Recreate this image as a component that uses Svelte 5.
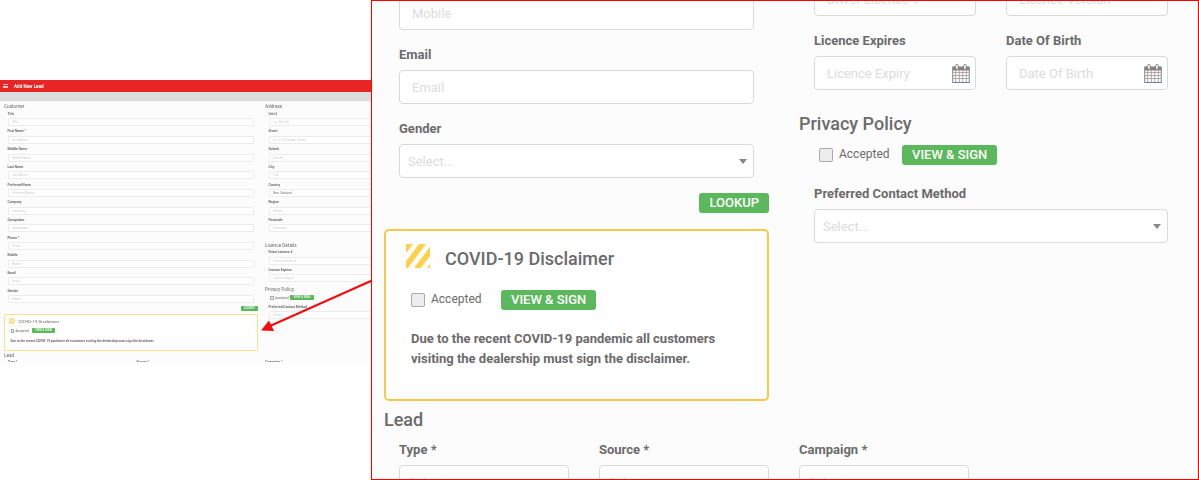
<script>
  const customerFields = [
    { label: 'Title', hint: 'Title' },
    { label: 'First Name *', hint: 'First Name' },
    { label: 'Middle Name', hint: 'Middle Name' },
    { label: 'Last Name', hint: 'Last Name' },
    { label: 'Preferred Name', hint: 'Preferred Name' },
    { label: 'Company', hint: 'Company' },
    { label: 'Occupation', hint: 'Occupation' },
    { label: 'Phone *', hint: 'Phone' },
    { label: 'Mobile', hint: 'Mobile' },
    { label: 'Email', hint: 'Email' },
    { label: 'Gender', hint: 'Select...' }
  ];

  const addressFields = [
    { label: 'Unit #', hint: 'e.g. Flat 6A' },
    { label: 'Street', hint: 'e.g. 123 Sample Street' },
    { label: 'Suburb', hint: 'Suburb' },
    { label: 'City', hint: 'City' },
    { label: 'Country', value: 'New Zealand' },
    { label: 'Region', hint: 'Select...' },
    { label: 'Postcode', hint: 'Postcode' }
  ];

  const licenceFields = [
    { label: 'Driver Licence #', hint: 'Driver Licence #' },
    { label: 'Licence Expires', hint: 'Licence Expiry' }
  ];

  const leadLabels = ['Type *', 'Source *', 'Campaign *'];
  const calendarCols = [3.5, 7, 10.5, 14];
  const calendarRows = [8.5, 11.5, 14.5];
</script>

{#snippet stripes(id)}
  <svg class="stripes" viewBox="0 0 24 24" aria-hidden="true">
    <clipPath {id}><rect width="24" height="24" /></clipPath>
    <g clip-path="url(#{id})" fill="#fbd14f">
      <polygon points="0,0 7,0 -11,24 -18,24" />
      <polygon points="13,0 20,0 2,24 -5,24" />
      <polygon points="26,0 33,0 15,24 8,24" />
      <polygon points="39,0 46,0 28,24 21,24" />
    </g>
  </svg>
{/snippet}

{#snippet calendar()}
  <svg class="calendar" viewBox="0 0 17.5 19" aria-hidden="true">
    <rect x="0.5" y="3" width="16.5" height="15.5" fill="#fff" stroke="#76808c" />
    <rect x="0.5" y="3" width="16.5" height="3.5" fill="#8d7f72" />
    <rect x="3.5" y="0.5" width="2.5" height="5" rx="1" fill="#fff" stroke="#6d6a68" stroke-width="0.8" />
    <rect x="11.5" y="0.5" width="2.5" height="5" rx="1" fill="#fff" stroke="#6d6a68" stroke-width="0.8" />
    {#each calendarCols as x}
      <line x1={x} x2={x} y1="6.5" y2="18" stroke="#8b8f99" stroke-width="0.8" />
    {/each}
    {#each calendarRows as y}
      <line x1="1" x2="16.5" y1={y} y2={y} stroke="#a8958d" stroke-width="0.8" />
    {/each}
  </svg>
{/snippet}

<div class="screen">
  <div class="thumb-area">
    <div class="thumb">
      <header class="t-bar">
        <span class="t-burger"><i></i><i></i><i></i></span>
        <span>Add New Lead</span>
      </header>
      <div class="t-strip"></div>
      <div class="t-body">
        <div class="t-cols">
          <section class="t-left">
            <h4>Customer</h4>
            {#each customerFields as f}
              <div class="t-field">
                <span>{f.label}</span>
                <input placeholder={f.hint} readonly />
              </div>
            {/each}
            <div class="t-lookup-row"><b class="t-btn t-lookup">LOOKUP</b></div>
            <div class="t-card">
              <div class="t-card-head">
                {@render stripes('stripe-small')}
                <span>COVID-19 Disclaimer</span>
              </div>
              <div class="t-check">
                <i></i><span>Accepted</span><b class="t-btn">VIEW &amp; SIGN</b>
              </div>
              <p>Due to the recent COVID-19 pandemic all customers visiting the dealership must sign the disclaimer.</p>
            </div>
          </section>
          <section class="t-right">
            <h4>Address</h4>
            {#each addressFields as f}
              <div class="t-field">
                <span>{f.label}</span>
                <input placeholder={f.hint} value={f.value ?? ''} readonly />
              </div>
            {/each}
            <h4 class="t-gap">Licence Details</h4>
            {#each licenceFields as f}
              <div class="t-field">
                <span>{f.label}</span>
                <input placeholder={f.hint} readonly />
              </div>
            {/each}
            <h4 class="t-privacy">Privacy Policy</h4>
            <div class="t-check t-check-right">
              <i></i><span>Accepted</span><b class="t-btn">VIEW &amp; SIGN</b>
            </div>
            <div class="t-field">
              <span>Preferred Contact Method</span>
              <input placeholder="Select..." readonly />
            </div>
          </section>
        </div>
        <h4 class="t-lead">Lead</h4>
        <div class="t-lead-row">
          {#each leadLabels as label}
            <span>{label}</span>
          {/each}
        </div>
      </div>
    </div>
  </div>

  <main class="panel">
    <div class="columns">
      <section class="left">
        <div class="field first-left">
          <input placeholder="Mobile" readonly />
        </div>
        <div class="field">
          <label for="email">Email</label>
          <input id="email" placeholder="Email" readonly />
        </div>
        <div class="field">
          <span class="label">Gender</span>
          <div class="select"><span>Select...</span><i class="caret"></i></div>
        </div>
        <div class="lookup-row"><button class="btn">LOOKUP</button></div>
        <div class="card">
          <div class="card-head">
            {@render stripes('stripe-large')}
            <h3>COVID-19 Disclaimer</h3>
          </div>
          <div class="accept card-accept">
            <i class="box"></i>
            <span>Accepted</span>
            <button class="btn">VIEW &amp; SIGN</button>
          </div>
          <p>Due to the recent COVID-19 pandemic all customers visiting the dealership must sign the disclaimer.</p>
        </div>
      </section>

      <section class="right">
        <div class="pair first-right">
          <input placeholder="Driver Licence #" readonly />
          <input placeholder="Licence Version" readonly />
        </div>
        <div class="pair">
          <div>
            <span class="label">Licence Expires</span>
            <div class="date"><input placeholder="Licence Expiry" readonly />{@render calendar()}</div>
          </div>
          <div>
            <span class="label">Date Of Birth</span>
            <div class="date"><input placeholder="Date Of Birth" readonly />{@render calendar()}</div>
          </div>
        </div>
        <h3 class="section-title privacy">Privacy Policy</h3>
        <div class="accept privacy-accept">
          <i class="box"></i>
          <span>Accepted</span>
          <button class="btn">VIEW &amp; SIGN</button>
        </div>
        <div class="field contact">
          <span class="label">Preferred Contact Method</span>
          <div class="select"><span>Select...</span><i class="caret"></i></div>
        </div>
      </section>
    </div>

    <h3 class="section-title lead-title">Lead</h3>
    <div class="lead-row">
      {#each leadLabels as label}
        <div class="lead-cell">
          <span class="label">{label}</span>
          <div class="select"><span>Select...</span></div>
        </div>
      {/each}
    </div>
  </main>

  <svg class="arrow" viewBox="0 0 1199 480" aria-hidden="true">
    <line x1="372" y1="280.5" x2="270" y2="326" stroke="#f40c0c" stroke-width="2" />
    <polygon points="261,330.5 269,320.5 274,331" fill="#f40c0c" />
  </svg>
</div>

<style>
  :global(body) {
    margin: 0;
    background: #fff;
  }

  .screen {
    position: relative;
    display: flex;
    width: 1199px;
    height: 480px;
    overflow: hidden;
    font-family: Roboto, "Liberation Sans", sans-serif;
    color: #6b6b6b;
  }

  /* small page shot on the left */
  .thumb-area {
    flex: 0 0 371px;
    min-width: 0;
    overflow: hidden;
    padding-top: 80px;
    box-sizing: border-box;
  }

  .thumb {
    height: 282px;
    overflow: hidden;
    background: #fcfcfc;
    filter: blur(0.35px);
  }

  .t-bar {
    display: flex;
    align-items: center;
    gap: 6px;
    height: 12px;
    padding-left: 3px;
    background: #e82525;
    color: #fff;
    font-size: 4.6px;
    font-weight: 700;
  }

  .t-burger {
    display: flex;
    flex-direction: column;
    gap: 0.6px;
    width: 5px;
  }

  .t-burger i {
    height: 1px;
    background: #f8c4c4;
  }

  .t-strip {
    height: 9.5px;
    border-bottom: 1px solid #f4f4f4;
    background: #dcdcdc;
    box-sizing: border-box;
    margin-bottom: 0.5px;
  }

  .t-body {
    padding: 1px 0 0 4px;
  }

  .t-cols {
    display: grid;
    grid-template-columns: 254px 340px;
    column-gap: 7px;
  }

  .t-body h4 {
    margin: 0;
    height: 7.8px;
    line-height: 7.8px;
    font-size: 4.7px;
    font-weight: 400;
  }

  .t-field {
    height: 17.7px;
    padding: 0 4px 0 3.5px;
  }

  .t-field span {
    display: block;
    height: 7.4px;
    line-height: 7.4px;
    font-size: 3.3px;
    font-weight: 700;
  }

  .t-field input {
    display: block;
    width: 100%;
    height: 8px;
    padding: 0 3px;
    box-sizing: border-box;
    border: 0.5px solid #ececec;
    border-radius: 1px;
    background: #fff;
    color: #777;
    font-family: inherit;
    font-size: 3.3px;
    outline: none;
  }

  .t-field input::placeholder {
    color: #ccc;
  }

  .t-lookup-row {
    display: flex;
    justify-content: flex-end;
    height: 9px;
    padding-top: 0.5px;
    box-sizing: border-box;
  }

  .t-btn {
    display: inline-block;
    height: 5px;
    line-height: 5px;
    padding: 0 3.5px;
    border-radius: 0.8px;
    background: #5cb85c;
    color: #fff;
    font-size: 2.9px;
    font-weight: 500;
  }

  .t-lookup {
    width: 17px;
    padding: 0;
    text-align: center;
  }

  .t-card {
    height: 36.5px;
    box-sizing: border-box;
    padding: 3px 5.5px 0;
    border: 1px solid #f8e08e;
    border-radius: 1px;
    background: #fefefe;
  }

  .t-card-head {
    display: flex;
    align-items: center;
    gap: 3.5px;
    font-size: 4.4px;
    margin-bottom: 4px;
  }

  .t-card-head :global(.stripes) {
    width: 6px;
    height: 6px;
    margin-left: -1.5px;
  }

  .t-check {
    display: flex;
    align-items: center;
    height: 5px;
    font-size: 3.2px;
  }

  .t-check i {
    width: 3.5px;
    height: 3.5px;
    box-sizing: border-box;
    border: 0.4px solid #aaa;
    background: #eee;
    margin-right: 1.5px;
  }

  .t-check span {
    width: 16px;
  }

  .t-check-right {
    margin: 1px 0 3px 5px;
    height: 5.5px;
  }

  .t-check-right span {
    width: 15px;
  }

  .t-card p {
    margin: 5.5px 0 0;
    font-size: 3.2px;
    font-weight: 700;
    white-space: nowrap;
  }

  .t-body .t-gap {
    margin-top: 7px;
  }

  .t-body .t-privacy {
    margin-top: 1.5px;
  }

  .t-body .t-lead {
    margin-top: 1px;
  }

  .t-lead-row {
    display: grid;
    grid-template-columns: repeat(4, 128.6px);
    padding-left: 4px;
    font-size: 3.3px;
    font-weight: 700;
  }

  /* enlarged view */
  .panel {
    flex: 1;
    min-width: 0;
    box-sizing: border-box;
    border: 1px solid #ff0000;
    padding: 0 14px 0 12px;
    background: #fcfcfc;
    overflow: hidden;
    font-size: 12px;
  }

  .columns {
    display: grid;
    grid-template-columns: 400px 400px;
  }

  .left {
    padding-right: 15px;
  }

  .right {
    padding: 0 15px;
  }

  .label,
  .field label {
    display: block;
    height: 22px;
    line-height: 14px;
    font-weight: 700;
    font-size: 13px;
  }

  .field {
    padding: 0 15px;
    margin-bottom: 18px;
  }

  input {
    font-family: inherit;
  }

  .field input,
  .pair input,
  .select {
    display: block;
    width: 100%;
    height: 34px;
    box-sizing: border-box;
    border: 1px solid #d9d9d9;
    border-radius: 4px;
    background: #fff;
    outline: none;
  }

  .field input,
  .pair input {
    padding: 0 12px;
    font-size: 13px;
  }

  .field input::placeholder,
  .pair input::placeholder {
    color: #dcdcdc;
  }

  .first-left {
    margin-top: -5px;
  }

  .select {
    display: flex;
    align-items: center;
    justify-content: space-between;
    padding: 0 6px 0 8px;
    color: #dcdcdc;
    font-size: 13px;
  }

  .caret {
    width: 0;
    height: 0;
    border-left: 4px solid transparent;
    border-right: 4px solid transparent;
    border-top: 5px solid #888;
  }

  .lookup-row {
    display: flex;
    justify-content: flex-end;
    margin-top: -3px;
    margin-bottom: 16px;
  }

  .btn {
    height: 20px;
    padding: 0 10px;
    border: none;
    border-radius: 3px;
    background: #5cb85c;
    color: #fff;
    font-family: inherit;
    font-size: 13px;
    font-weight: 500;
    line-height: 20px;
  }

  .card {
    height: 172px;
    box-sizing: border-box;
    padding: 13px 25px 0;
    border: 2px solid #f7c948;
    border-radius: 5px;
    background: #fefefe;
  }

  .card-head {
    display: flex;
    align-items: flex-start;
    gap: 15px;
    height: 24px;
    margin-left: -5px;
  }

  .stripes {
    display: block;
    flex: none;
    width: 24px;
    height: 24px;
  }

  .card-head h3,
  .section-title {
    margin: 0;
    font-size: 18px;
    font-weight: 500;
    line-height: 22px;
    color: #6b6b6b;
  }

  .card-head h3 {
    margin-top: 4px;
  }

  .accept {
    display: flex;
    align-items: center;
  }

  .accept span {
    margin-top: -2px;
  }

  .card-accept {
    margin-top: 22px;
  }

  .box {
    width: 14px;
    height: 14px;
    box-sizing: border-box;
    border: 1px solid #aaa;
    border-radius: 2px;
    background: #ededed;
    margin-right: 6px;
  }

  .card-accept span {
    width: 70px;
  }

  .card p {
    margin: 19px 0 0;
    line-height: 20px;
    font-weight: 700;
    font-size: 13px;
  }

  .pair {
    display: grid;
    grid-template-columns: 162px 162px;
    column-gap: 30px;
    padding: 0 15px;
    margin-bottom: 18px;
  }

  .first-right {
    margin-top: -19px;
  }

  .date {
    position: relative;
  }

  .date :global(.calendar) {
    position: absolute;
    right: 6px;
    top: 8px;
    width: 18px;
    height: 19px;
  }

  .privacy {
    margin-top: 23px;
  }

  .privacy-accept {
    margin: 10px 0 0 20px;
  }

  .privacy-accept span {
    width: 63px;
  }

  .contact {
    margin-top: 22px;
    padding-right: 1px;
  }

  .lead-title {
    margin-top: 8px;
  }

  .lead-row {
    display: grid;
    grid-template-columns: repeat(4, 200px);
    margin-top: 12px;
  }

  .lead-cell {
    padding: 0 15px;
  }

  .arrow {
    position: absolute;
    inset: 0;
    width: 1199px;
    height: 480px;
    pointer-events: none;
  }
</style>
